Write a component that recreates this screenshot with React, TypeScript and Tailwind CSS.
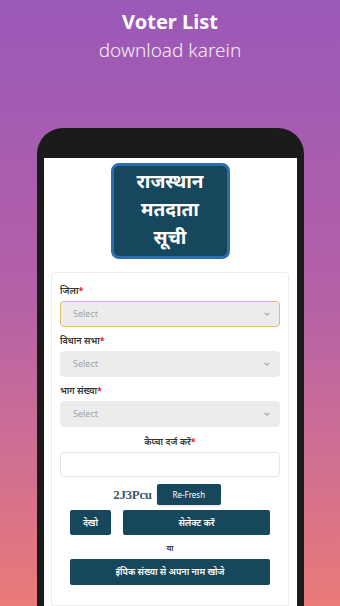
import React from 'react';

const font = { fontFamily: '"Noto Sans", "Open Sans", sans-serif' };

// Small chevron used inside the select boxes
const Chevron: React.FC = () => (
  <svg width="8" height="8" viewBox="0 0 10 10" fill="none" stroke="#9ca3af" strokeWidth="1.4">
    <path d="M2 3.5 L5 6.5 L8 3.5" />
  </svg>
);

const SelectBox: React.FC<{ active?: boolean }> = ({ active }) => (
  <div
    className={`h-[26px] rounded-[4px] bg-[#ececec] flex items-center justify-between pl-3 pr-2 ${
      active ? 'border border-[#e9b96a]' : 'border border-[#ececec]'
    }`}
  >
    <span className="text-[9px] text-[#a3a3a3]">Select</span>
    <Chevron />
  </div>
);

const Label: React.FC<{ text: string }> = ({ text }) => (
  <div className="text-[9px] font-semibold text-[#333] leading-none mb-[6px]">
    {text}
    <span className="text-red-600">*</span>
  </div>
);

const App: React.FC = () => {
  return (
    <div
      className="w-[340px] h-[606px] overflow-hidden flex flex-col items-center bg-gradient-to-b from-[#9a58b8] via-[#b561a6] to-[#ea7a78]"
      style={font}
    >
      <div className="pt-[9px] text-center text-white">
        <h1 className="text-[20px] font-bold leading-[26px]">Voter List</h1>
        <p className="text-[19px] font-light leading-[30px] text-white/90">download karein</p>
      </div>

      <div className="mt-[63px] w-[267px] flex-1 bg-[#1b1b1b] rounded-t-[26px] pt-[30px] px-[7px]">
        <div className="bg-white h-full flex flex-col items-center pt-[5px]">
          <div className="w-[119px] h-[96px] rounded-[8px] bg-[#17475c] border-[3px] border-[#2d6db0] flex flex-col items-center justify-center text-white font-bold text-[19px] leading-[28px] pb-[4px]">
            <span>राजस्थान</span>
            <span>मतदाता</span>
            <span>सूची</span>
          </div>

          <div className="mt-[13px] w-[238px] flex-1 border border-[#ededed] rounded-t-[4px] px-[8px] pt-[13px]">
            <Label text="जिला" />
            <SelectBox active />
            <div className="h-[9px]" />
            <Label text="विधान सभा" />
            <SelectBox />
            <div className="h-[9px]" />
            <Label text="भाग संख्या" />
            <SelectBox />
            <div className="text-center mt-[10px]">
              <Label text="कैप्चा दर्ज करें" />
            </div>
            <div className="h-[25px] rounded-[4px] border border-[#e5e5e5]" />

            <div className="flex items-center justify-center gap-[5px] mt-[7px] pr-[6px]">
              <span
                className="text-[13px] font-bold text-[#3b5b6b] tracking-tight"
                style={{ fontFamily: '"Liberation Serif", serif' }}
              >
                2J3Pcu
              </span>
              <div className="w-[64px] h-[21px] bg-[#17475c] rounded-[2px] text-white text-[8px] flex items-center justify-center shadow-sm">
                Re-Fresh
              </div>
            </div>

            <div className="flex gap-[12px] mt-[5px] px-[10px]">
              <div className="w-[41px] h-[25px] bg-[#17475c] rounded-[2px] text-white text-[9px] font-semibold flex items-center justify-center">
                देखो
              </div>
              <div className="flex-1 h-[25px] bg-[#17475c] rounded-[2px] text-white text-[9px] font-semibold flex items-center justify-center">
                सेलेक्ट करें
              </div>
            </div>

            <div className="text-center text-[8px] text-[#333] font-semibold mt-[7px]">या</div>

            <div className="mx-[10px] mt-[5px] h-[26px] bg-[#17475c] rounded-[2px] text-white text-[9px] font-semibold flex items-center justify-center">
              ईपिक संख्या से अपना नाम खोजे
            </div>
          </div>
        </div>
      </div>
    </div>
  );
};

export default App;
